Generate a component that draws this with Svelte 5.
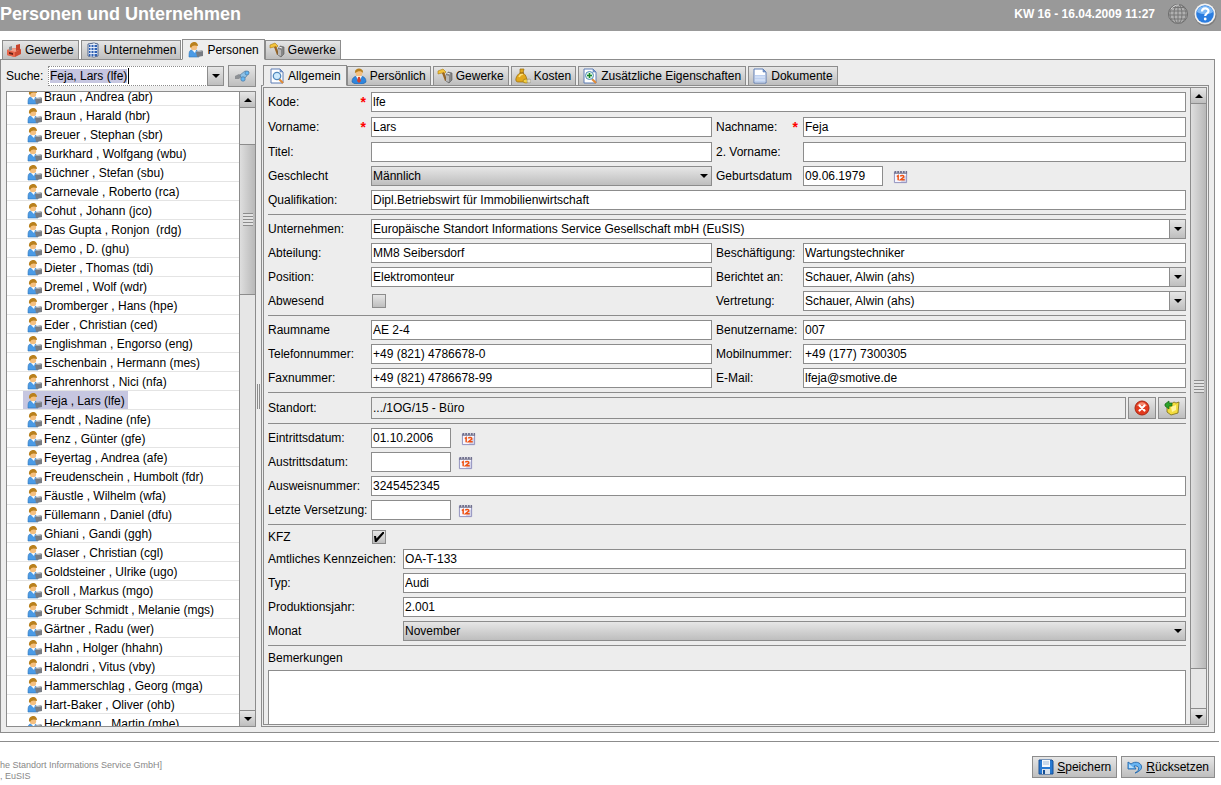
<script lang="ts">
	import { onMount } from 'svelte';

	const MODULES = [
		{ label: 'Gewerbe', icon: 'factory' },
		{ label: 'Unternehmen', icon: 'building' },
		{ label: 'Personen', icon: 'worker' },
		{ label: 'Gewerke', icon: 'hammer' }
	];

	const TABS = [
		{ label: 'Allgemein', icon: 'search' },
		{ label: 'Persönlich', icon: 'user' },
		{ label: 'Gewerke', icon: 'hammer' },
		{ label: 'Kosten', icon: 'money' },
		{ label: 'Zusätzliche Eigenschaften', icon: 'plus' },
		{ label: 'Dokumente', icon: 'page' }
	];

	const PEOPLE = [
		'Braun , Andrea (abr)',
		'Braun , Harald (hbr)',
		'Breuer , Stephan (sbr)',
		'Burkhard , Wolfgang (wbu)',
		'Büchner , Stefan (sbu)',
		'Carnevale , Roberto (rca)',
		'Cohut , Johann (jco)',
		'Das Gupta , Ronjon  (rdg)',
		'Demo , D. (ghu)',
		'Dieter , Thomas (tdi)',
		'Dremel , Wolf (wdr)',
		'Dromberger , Hans (hpe)',
		'Eder , Christian (ced)',
		'Englishman , Engorso (eng)',
		'Eschenbain , Hermann (mes)',
		'Fahrenhorst , Nici (nfa)',
		'Feja , Lars (lfe)',
		'Fendt , Nadine (nfe)',
		'Fenz , Günter (gfe)',
		'Feyertag , Andrea (afe)',
		'Freudenschein , Humbolt (fdr)',
		'Fäustle , Wilhelm (wfa)',
		'Füllemann , Daniel (dfu)',
		'Ghiani , Gandi (ggh)',
		'Glaser , Christian (cgl)',
		'Goldsteiner , Ulrike (ugo)',
		'Groll , Markus (mgo)',
		'Gruber Schmidt , Melanie (mgs)',
		'Gärtner , Radu (wer)',
		'Hahn , Holger (hhahn)',
		'Halondri , Vitus (vby)',
		'Hammerschlag , Georg (mga)',
		'Hart-Baker , Oliver (ohb)',
		'Heckmann , Martin (mhe)'
	];

	let activeModule = $state('Personen');
	let activeTab = $state('Allgemein');
	let selected = $state('Feja , Lars (lfe)');
	let searchBox: HTMLInputElement;

	onMount(() => {
		searchBox.focus();
		searchBox.select();
	});
</script>

{#snippet icon(name: string)}
	<svg class="icon" viewBox="0 0 16 16" aria-hidden="true">
		{#if name === 'factory'}
			<path d="M1 8l5-2 9 1v5l-6 3-8-2z" fill="#cf4a32" />
			<path d="M1 8l8 2v5l-8-2z" fill="#e8674c" />
			<path d="M1 8l5-2 9 1-6 3z" fill="#f3a08c" />
			<path d="M10 3l4-1v6l-4 1z" fill="#c8442c" />
			<path d="M3 5l3-1v4l-3 1z" fill="#8d8d8d" />
			<path d="M3 10l4 1v2l-4-1z" fill="#6d2016" />
		{:else if name === 'building'}
			<path d="M3 2l6-1 4 1v12l-4 1-6-1z" fill="#dfe8f6" stroke="#53688f" />
			<path d="M4 4h8M4 7h8M4 10h8M4 13h8" stroke="#2c5fb4" stroke-width="2" />
			<path d="M6 2v13M9 1v14" stroke="#eef3fb" />
		{:else if name === 'worker'}
			<path d="M1 15c0-4 0-7 3-7h3c2 0 4 2 4 4v3z" fill="#4b9be6" stroke="#2f75ba" stroke-width=".6" />
			<path d="M4 8h4l-1 3z" fill="#fff" />
			<circle cx="6" cy="5" r="3.2" fill="#f5c080" />
			<path d="M2 5c-1-6 8-7 8-1-3-1-6-1-7 2z" fill="#b9801d" />
			<path d="M8 10l7-1v5l-6 1z" fill="#777c83" />
			<path d="M8 10l7-1-1-1-5 1z" fill="#a7abb0" />
		{:else if name === 'user'}
			<path d="M1 14c0-4 2-6 7-6s7 2 7 6c-3 3-11 3-14 0z" fill="#2f86dc" stroke="#1d5ea6" stroke-width=".6" />
			<path d="M5 8l3 6 3-6z" fill="#fff" />
			<path d="M7 9h2l1 4-2 2-2-2z" fill="#d6402b" />
			<circle cx="8" cy="5" r="3.4" fill="#f5c080" />
			<path d="M4 5c-1-6 9-6 8 0-1-2-5-2-6-1z" fill="#b9801d" />
		{:else if name === 'hammer'}
			<path d="M1 3l5-2 3 3-2 2-2-1-4 1z" fill="#f3c33a" stroke="#a87b12" stroke-width=".6" />
			<path d="M5 5l3 8 2-1-3-8z" fill="#9a6524" />
			<path d="M9 7l2-3 4 1v7l-3 3-3-2z" fill="#878787" stroke="#555" stroke-width=".6" />
			<path d="M9 7l3 1v6l-3-1z" fill="#b8b8b8" />
			<path d="M10 5l3 1" stroke="#eee" />
		{:else if name === 'search' || name === 'plus' || name === 'page'}
			<path d="M2 1h9l3 3v11H2z" fill="#fff" stroke="#5c7db5" />
			<path d="M11 1v3h3z" fill="#7d9cd0" stroke="#5c7db5" stroke-width=".6" />
			{#if name === 'search'}
				<path d="M10 11l4 4" stroke="#e08a35" stroke-width="2.2" />
				<circle cx="8" cy="8" r="3.7" fill="#cdeafd" stroke="#5289bd" stroke-width="1.3" />
			{:else if name === 'plus'}
				<path d="M10 11l4 4" stroke="#e08a35" stroke-width="2.2" />
				<circle cx="7.5" cy="7.5" r="4" fill="#e2f6e3" stroke="#5289bd" />
				<path d="M7.5 5v5M5 7.5h5" stroke="#13842b" stroke-width="1.5" />
			{:else}
				<path d="M3 7h10v7H3z" fill="#bdd0f0" />
				<path d="M3 9h10M3 12h10" stroke="#e3ebf9" />
			{/if}
		{:else if name === 'money'}
			<path d="M5 1h4l-1 4c4 2 5 9 2 9H3c-4 0-2-7 2-9z" fill="#e2a81d" stroke="#966a0c" stroke-width=".7" />
			<path d="M4 9c1-2 2-3 4-3" stroke="#ffe27a" stroke-width="1.5" fill="none" />
			<path d="M5 5h4" stroke="#8a5d10" />
			<ellipse cx="11" cy="13" rx="3" ry="2" fill="#f4d245" stroke="#9b7412" stroke-width=".7" />
			<circle cx="14" cy="13" r="2" fill="#e4e0c4" stroke="#999" stroke-width=".7" />
		{:else if name === 'calendar'}
			<path d="M1.5 3h13v11.500h-13z" fill="#f6f6ff" stroke="#8d8dbb" />
			<path d="M14 6v8H8z" fill="#8181b8" opacity=".3" />
			<path d="M2 2h13v3H1z" fill="#70708c" />
			<path d="M4 1v3M7 1v3M10 1v3M13 1v3" stroke="#e6e6ee" />
			<path d="M4 8l1.500-1v5M8 8c0-1.500 4-1.500 3.500.5L8 11.500h4.500" fill="none" stroke="#ee5214" stroke-width="1.600" />
		{:else if name === 'find'}
			<path d="M1 8l4-2 3 2-3 3H1z" fill="#8d9094" />
			<path d="M6 7l5-4 4 1-3 5-4 3z" fill="#8fc1e5" stroke="#597a99" stroke-width=".7" />
			<circle cx="13" cy="5" r="2" fill="#64b8f5" stroke="#4977a2" stroke-width=".7" />
			<circle cx="9" cy="11" r="2.2" fill="#64b8f5" stroke="#4977a2" stroke-width=".7" />
		{:else if name === 'delete'}
			<circle cx="8" cy="8" r="7" fill="#e13a1e" stroke="#a92612" />
			<path d="M3 6c2-5 8-5 10 0-3-1-7-1-10 0z" fill="#f58a70" />
			<path d="M5.5 5.5l5 5M10.5 5.5l-5 5" stroke="#fff" stroke-width="2.2" stroke-linecap="round" />
		{:else if name === 'locate'}
			<path d="M3 5l4 1V4l3-2 2 1 3-1-1 11-7 2-4-3z" fill="#f3dc3d" stroke="#776914" stroke-width=".8" />
			<path d="M7 7l5-2v5l-4 2z" fill="#fff4a0" />
			<path d="M1 4l4-3v2h3v3H5v3L1 6z" fill="#2ca22b" stroke="#146415" stroke-width=".7" />
		{:else if name === 'save'}
			<path d="M1 1h13l1 1v13H1z" fill="#2779d2" stroke="#174f95" />
			<path d="M4 1h8v7H4z" fill="#f4f8fc" />
			<path d="M5 3h6M5 5h6" stroke="#9db8d6" />
			<path d="M4 10h8v5H4z" fill="#d9e2ec" />
			<path d="M5 11h2v4H5z" fill="#174f95" />
		{:else if name === 'undo'}
			<path d="M8 14c5-2 5-8-1-7l2 3H1V3l3 2c8-6 17 5 4 9z" fill="#68b4f2" stroke="#2268ad" stroke-width=".9" stroke-linejoin="round" />
			<path d="M2 5v4h5z" fill="#b9dffb" />
		{/if}
	</svg>
{/snippet}

{#snippet label(id: string, text: string, required = false)}
	<label for={id}>
		{text}
		{#if required}<span class="star">*</span>{/if}
	</label>
{/snippet}

{#snippet combo(id: string, value: string)}
	<div class="combo">
		<input {id} type="text" {value} />
		<button type="button" class="drop" aria-label="Öffnen"><i class="down"></i></button>
	</div>
{/snippet}

{#snippet choice(id: string, options: string[])}
	<div class="choice">
		<select {id}>
			{#each options as o}
				<option>{o}</option>
			{/each}
		</select>
		<i class="down"></i>
	</div>
{/snippet}

{#snippet date(id: string, value: string)}
	<div class="date" class:filled={value !== ''}>
		<input {id} type="text" {value} />
		<button type="button" class="plain" aria-label="Kalender">{@render icon('calendar')}</button>
	</div>
{/snippet}

{#snippet scrollbar(kind: string)}
	<div class="scrollbar {kind}">
		<button type="button" aria-label="Nach oben"><i class="up"></i></button>
		<div class="before"></div>
		<div class="thumb"><span class="grip"></span></div>
		<div class="after"></div>
		<button type="button" aria-label="Nach unten"><i class="down"></i></button>
	</div>
{/snippet}

<div class="app">
	<header>
		<h1>Personen und Unternehmen</h1>
		<span class="clock">KW 16 - 16.04.2009 11:27</span>
		<button type="button" class="plain round" aria-label="Sprache">
			<svg viewBox="0 0 22 22" fill="none">
				<circle cx="11" cy="11" r="9.5" fill="#b0b0b0" stroke="#6a6a6a" />
				<ellipse cx="11" cy="11" rx="4" ry="9.5" stroke="#747474" />
				<ellipse cx="11" cy="11" rx="8" ry="9.5" stroke="#808080" />
				<path d="M11 1v20M2 8h18M1 12h20M3 16h16M4 4.500h14" stroke="#747474" />
				<path d="M4 6c2-3 5-4 8-4" stroke="#d5d5d5" />
			</svg>
		</button>
		<button type="button" class="plain help" aria-label="Hilfe">
			<svg viewBox="0 0 24 24">
				<circle cx="12.5" cy="13" r="11" fill="#6d6d6d" opacity=".6" />
				<circle cx="12" cy="12" r="10.5" fill="#f1f1f1" />
				<circle cx="12" cy="12" r="8.8" fill="#2b7de0" />
				<path d="M4 10c1-8 15-8 16 0-4 3-11 3-16 0z" fill="#7db8f5" />
				<path d="M9 9.500c0-4 6.500-4 6.500-.5 0 2.500-3.300 2.300-3.300 5" fill="none" stroke="#fff" stroke-width="2.2" />
				<circle cx="12.2" cy="17" r="1.4" fill="#fff" />
			</svg>
		</button>
	</header>

	<nav class="tabs modules">
		{#each MODULES as m}
			<button type="button" class:active={m.label === activeModule} onclick={() => (activeModule = m.label)}>
				{@render icon(m.icon)}{m.label}
			</button>
		{/each}
	</nav>

	<main>
		<aside>
			<div class="search">
				<label for="suche">Suche:</label>
				<div class="combo">
					<input id="suche" type="text" value="Feja, Lars (lfe)" bind:this={searchBox} />
					<button type="button" class="drop" aria-label="Öffnen"><i class="down"></i></button>
				</div>
				<button type="button" class="btn" aria-label="Suchen">{@render icon('find')}</button>
			</div>
			<div class="list">
				<ul>
					{#each PEOPLE as p (p)}
						<li>
							<button type="button" class:selected={p === selected} onclick={() => (selected = p)}>
								{@render icon('worker')}{p}
							</button>
						</li>
					{/each}
				</ul>
				{@render scrollbar('people')}
			</div>
		</aside>

		<div class="splitter"><span></span></div>

		<section>
			<nav class="tabs">
				{#each TABS as t}
					<button type="button" class:active={t.label === activeTab} onclick={() => (activeTab = t.label)}>
						{@render icon(t.icon)}{t.label}
					</button>
				{/each}
			</nav>

			<div class="frame">
				<div class="pane">
					<form>
						<div class="group">
							<div class="row mandatory">
								{@render label('kode', 'Kode:', true)}
								<input class="wide" id="kode" type="text" value="lfe" />
							</div>
							<div class="row mandatory">
								{@render label('vorname', 'Vorname:', true)}
								<input id="vorname" type="text" value="Lars" />
								{@render label('nachname', 'Nachname:', true)}
								<input id="nachname" type="text" value="Feja" />
							</div>
							<div class="row">
								{@render label('titel', 'Titel:')}
								<input id="titel" type="text" />
								{@render label('vorname2', '2. Vorname:')}
								<input id="vorname2" type="text" />
							</div>
							<div class="row">
								{@render label('geschlecht', 'Geschlecht')}
								{@render choice('geschlecht', ['Männlich', 'Weiblich'])}
								{@render label('geburt', 'Geburtsdatum')}
								{@render date('geburt', '09.06.1979')}
							</div>
							<div class="row">
								{@render label('quali', 'Qualifikation:')}
								<input class="wide" id="quali" type="text" value="Dipl.Betriebswirt für Immobilienwirtschaft" />
							</div>
						</div>

						<div class="group">
							<div class="row">
								{@render label('firma', 'Unternehmen:')}
								<div class="wide">
									{@render combo('firma', 'Europäische Standort Informations Service Gesellschaft mbH (EuSIS)')}
								</div>
							</div>
							<div class="row">
								{@render label('abteilung', 'Abteilung:')}
								<input id="abteilung" type="text" value="MM8 Seibersdorf" />
								{@render label('beruf', 'Beschäftigung:')}
								<input id="beruf" type="text" value="Wartungstechniker" />
							</div>
							<div class="row">
								{@render label('position', 'Position:')}
								<input id="position" type="text" value="Elektromonteur" />
								{@render label('chef', 'Berichtet an:')}
								{@render combo('chef', 'Schauer, Alwin (ahs)')}
							</div>
							<div class="row">
								{@render label('abwesend', 'Abwesend')}
								<input id="abwesend" type="checkbox" />
								{@render label('vertretung', 'Vertretung:')}
								{@render combo('vertretung', 'Schauer, Alwin (ahs)')}
							</div>
						</div>

						<div class="group">
							<div class="row">
								{@render label('raum', 'Raumname')}
								<input id="raum" type="text" value="AE 2-4" />
								{@render label('login', 'Benutzername:')}
								<input id="login" type="text" value="007" />
							</div>
							<div class="row">
								{@render label('telefon', 'Telefonnummer:')}
								<input id="telefon" type="text" value="+49 (821) 4786678-0" />
								{@render label('mobil', 'Mobilnummer:')}
								<input id="mobil" type="text" value="+49 (177) 7300305" />
							</div>
							<div class="row">
								{@render label('fax', 'Faxnummer:')}
								<input id="fax" type="text" value="+49 (821) 4786678-99" />
								{@render label('mail', 'E-Mail:')}
								<input id="mail" type="text" value="lfeja@smotive.de" />
							</div>
						</div>

						<div class="group">
							<div class="row place">
								{@render label('standort', 'Standort:')}
								<div class="wide location">
									<input id="standort" type="text" value=".../1OG/15 - Büro" readonly />
									<button type="button" class="btn" aria-label="Entfernen">{@render icon('delete')}</button>
									<button type="button" class="btn" aria-label="Standort wählen">{@render icon('locate')}</button>
								</div>
							</div>
						</div>

						<div class="group">
							<div class="row">
								{@render label('eintritt', 'Eintrittsdatum:')}
								{@render date('eintritt', '01.10.2006')}
							</div>
							<div class="row">
								{@render label('austritt', 'Austrittsdatum:')}
								{@render date('austritt', '')}
							</div>
							<div class="row">
								{@render label('ausweis', 'Ausweisnummer:')}
								<input class="wide" id="ausweis" type="text" value="3245452345" />
							</div>
							<div class="row">
								{@render label('versetzung', 'Letzte Versetzung:')}
								{@render date('versetzung', '')}
							</div>
						</div>

						<div class="group">
							<div class="row short">
								{@render label('kfz', 'KFZ')}
								<input id="kfz" type="checkbox" checked />
							</div>
							<div class="row car">
								{@render label('kennzeichen', 'Amtliches Kennzeichen:')}
								<input id="kennzeichen" type="text" value="OA-T-133" />
							</div>
							<div class="row car">
								{@render label('typ', 'Typ:')}
								<input id="typ" type="text" value="Audi" />
							</div>
							<div class="row car">
								{@render label('jahr', 'Produktionsjahr:')}
								<input id="jahr" type="text" value="2.001" />
							</div>
							<div class="row car">
								{@render label('monat', 'Monat')}
								{@render choice('monat', ['November', 'Dezember'])}
							</div>
						</div>

						<div class="group notes">
							<div class="row short">{@render label('bemerkungen', 'Bemerkungen')}</div>
							<textarea id="bemerkungen"></textarea>
						</div>
					</form>
					{@render scrollbar('details')}
				</div>
			</div>
		</section>
	</main>

	<footer>
		<p>he Standort Informations Service GmbH]<br />, EuSIS</p>
		<button type="button" class="btn">{@render icon('save')}<span><u>S</u>peichern</span></button>
		<button type="button" class="btn">{@render icon('undo')}<span><u>R</u>ücksetzen</span></button>
	</footer>
</div>

<style>
	:global(body) {
		margin: 0;
		background: #fff;
	}

	.app {
		--line: #8c8c8c;
		--face: #ededed;
		--grad: linear-gradient(#e6e6e6, #bebebe);
		display: flex;
		flex-direction: column;
		height: 100vh;
		overflow: hidden;
		font-family: 'Liberation Sans', Arial, sans-serif;
		font-size: 12px;
		color: #000;
	}

	.app * {
		box-sizing: border-box;
	}

	button,
	input,
	select,
	textarea {
		font: inherit;
		color: inherit;
		margin: 0;
		border-radius: 0;
		outline: none;
	}

	.icon {
		width: 16px;
		height: 16px;
		flex: none;
	}

	header {
		display: flex;
		align-items: center;
		flex: none;
		height: 31px;
		padding: 0 4px 0 0;
		background: #999;
		color: #fff;
	}

	h1 {
		margin: 0;
		flex: 1;
		font-size: 18px;
		line-height: 28px;
		padding-bottom: 3px;
	}

	.clock {
		font-weight: bold;
		margin-right: 12px;
		line-height: 28px;
		padding-bottom: 3px;
	}

	.plain {
		display: flex;
		flex: none;
		padding: 0;
		border: 0;
		background: none;
	}

	.round,
	.help {
		width: 22px;
		padding-bottom: 4px;
	}

	.help {
		width: 24px;
		margin-left: 4px;
	}

	.plain svg {
		width: 100%;
	}

	.tabs {
		display: flex;
		align-items: flex-end;
		gap: 2px;
		flex: none;
		height: 20px;
		position: relative;
		margin-bottom: -1px;
	}

	.tabs button {
		display: flex;
		align-items: center;
		gap: 3px;
		height: 20px;
		padding: 0 4px 0 3px;
		border: 1px solid var(--line);
		background: var(--grad);
		white-space: nowrap;
	}

	.tabs .active {
		height: 21px;
		margin: 0 -2px 0 -1px;
		padding: 0 5px;
		background: var(--face);
		border-bottom-color: var(--face);
	}

	.tabs .active:first-child {
		margin-left: 0;
	}

	.modules {
		margin-top: 9px;
		padding-left: 2px;
	}

	main {
		display: flex;
		flex: 1;
		min-height: 0;
		margin-right: 6px;
		padding: 5px;
		border: 1px solid var(--line);
		background: var(--face);
	}

	aside {
		display: flex;
		flex-direction: column;
		gap: 4px;
		flex: none;
		width: 250px;
	}

	.search {
		display: flex;
		align-items: center;
		height: 22px;
	}

	.search label {
		width: 42px;
		padding: 0;
	}

	.search .combo {
		flex: 1;
		margin-right: 4px;
	}

	.btn {
		display: flex;
		align-items: center;
		justify-content: center;
		gap: 3px;
		height: 22px;
		min-width: 28px;
		padding: 0 5px;
		border: 1px solid var(--line);
		background: var(--grad);
		white-space: nowrap;
	}

	.list {
		display: flex;
		flex: 1;
		min-height: 0;
		border: 1px solid var(--line);
		background: #fff;
		overflow: hidden;
	}

	ul {
		flex: 1;
		list-style: none;
		margin: -5px 0 0;
		padding: 0;
	}

	li {
		display: flex;
		height: 19px;
		padding-left: 16px;
		border-bottom: 1px solid #e4e4e4;
	}

	li button {
		display: flex;
		align-items: center;
		gap: 1px;
		padding: 1px 3px 0 4px;
		border: 0;
		background: none;
		white-space: pre;
	}

	li .selected {
		background: #c6c6e0;
	}

	.scrollbar {
		display: flex;
		flex-direction: column;
		flex: none;
		width: 16px;
		border-left: 1px solid var(--line);
		background: #e6e6e6;
	}

	.scrollbar button {
		display: flex;
		align-items: center;
		justify-content: center;
		flex: none;
		height: 16px;
		padding: 0;
		border: 0;
		border-bottom: 1px solid var(--line);
		background: var(--grad);
	}

	.scrollbar button:last-child {
		border-bottom: 0;
		border-top: 1px solid var(--line);
	}

	.thumb {
		display: flex;
		align-items: center;
		justify-content: center;
		border: solid var(--line);
		border-width: 1px 0;
		background: linear-gradient(to right, #dedede, #b8b8b8);
	}

	.grip {
		width: 10px;
		height: 13px;
		background: repeating-linear-gradient(#8c8c8c 0 1px, #e2e2e2 1px 3px);
	}

	.people .before {
		flex: 36;
	}

	.people .thumb {
		flex: 150;
	}

	.people .after {
		flex: 417;
	}

	.details .thumb {
		flex: 565;
		border-top: 0;
	}

	.details .after {
		flex: 39;
	}

	.up,
	.down {
		display: block;
		border: 4px solid transparent;
		border-top-color: #000;
		border-bottom-width: 0;
	}

	.up {
		border-bottom: 4px solid #000;
		border-top-width: 0;
	}

	.splitter {
		display: flex;
		align-items: center;
		justify-content: center;
		flex: none;
		width: 5px;
	}

	.splitter span {
		width: 3px;
		height: 25px;
		border: solid var(--line);
		border-width: 0 1px;
	}

	section {
		display: flex;
		flex-direction: column;
		flex: 1;
		min-width: 0;
	}

	section .tabs {
		height: 21px;
		padding-left: 2px;
	}

	.frame {
		display: flex;
		flex: 1;
		min-height: 0;
		padding: 1px;
		border: 1px solid var(--line);
	}

	.pane {
		display: flex;
		flex: 1;
		min-width: 0;
		border: 1px solid var(--line);
		overflow: hidden;
	}

	form {
		flex: 1;
		min-width: 0;
		padding: 0 4px;
		overflow: hidden;
	}

	.group {
		display: flex;
		flex-direction: column;
		gap: 4px;
		padding: 4px 0;
	}

	.group + .group {
		border-top: 1px solid var(--line);
	}

	.row {
		display: grid;
		grid-template-columns: 103px minmax(0, 341fr) 91px minmax(0, 383fr);
		align-items: center;
		height: 20px;
	}

	.mandatory {
		height: 21px;
		align-items: start;
	}

	.place {
		height: 22px;
	}

	.short {
		height: 16px;
	}

	.car {
		grid-template-columns: 135px minmax(0, 1fr);
	}

	.wide {
		grid-column: 2 / -1;
	}

	label {
		display: flex;
		justify-content: space-between;
		line-height: 20px;
		padding-right: 5px;
		white-space: nowrap;
	}

	.short label {
		line-height: 16px;
	}

	.row > label:nth-child(3) {
		padding-left: 4px;
	}

	.star {
		color: #f00;
		font-size: 14px;
		font-weight: bold;
	}

	input[type='text'] {
		width: 100%;
		height: 20px;
		padding: 0 1px;
		border: 1px solid var(--line);
		background: #fff;
	}

	input[type='text']:read-only {
		height: 22px;
		background: var(--face);
	}

	.search input[type='text'] {
		border-style: dotted;
		line-height: 18px;
		background: linear-gradient(#000, #000) 79px 1px / 1px 16px no-repeat #fff;
	}

	.search input[type='text']::selection {
		background: #c6c6e0;
		color: #000;
	}

	input[type='checkbox'] {
		appearance: none;
		display: grid;
		place-items: center;
		width: 14px;
		height: 14px;
		margin-left: 1px;
		border: 1px solid var(--line);
		background: var(--grad);
	}

	input[type='checkbox']:checked::before {
		content: '';
		width: 10px;
		height: 10px;
		background: #000;
		clip-path: polygon(0 40%, 20% 40%, 25% 65%, 85% 0, 100% 0, 100% 15%, 25% 100%, 8% 100%);
	}

	.combo {
		display: flex;
		min-width: 0;
	}

	.combo input {
		flex: 1;
		min-width: 0;
	}

	.drop {
		display: flex;
		align-items: center;
		justify-content: center;
		flex: none;
		width: 17px;
		margin-left: -1px;
		padding: 0;
		border: 1px solid var(--line);
		background: var(--grad);
	}

	.choice {
		display: grid;
		align-items: center;
	}

	.choice > * {
		grid-area: 1 / 1;
	}

	.choice .down {
		justify-self: end;
		margin-right: 4px;
		pointer-events: none;
	}

	select {
		appearance: none;
		width: 100%;
		height: 20px;
		padding: 0 1px;
		border: 1px solid var(--line);
		background: var(--grad);
	}

	.date {
		display: flex;
		align-items: center;
		gap: 7px;
	}

	.filled {
		gap: 10px;
	}

	.date input[type='text'] {
		width: 80px;
	}

	.date .icon {
		width: 15px;
		height: 15px;
	}

	.location {
		display: flex;
		gap: 2px;
	}

	.location input {
		flex: 1;
	}

	.notes {
		padding-bottom: 0;
	}

	textarea {
		display: block;
		width: 100%;
		height: 96px;
		border: 1px solid var(--line);
		background: #fff;
		resize: none;
	}

	footer {
		display: flex;
		gap: 4px;
		flex: none;
		margin: 8px 2px 0 0;
		padding: 14px 4px 7px 0;
		border-top: 1px solid var(--line);
	}

	footer p {
		flex: 1;
		margin: 4px 0 -4px;
		font-size: 9px;
		line-height: 11px;
		color: #888;
	}
</style>
